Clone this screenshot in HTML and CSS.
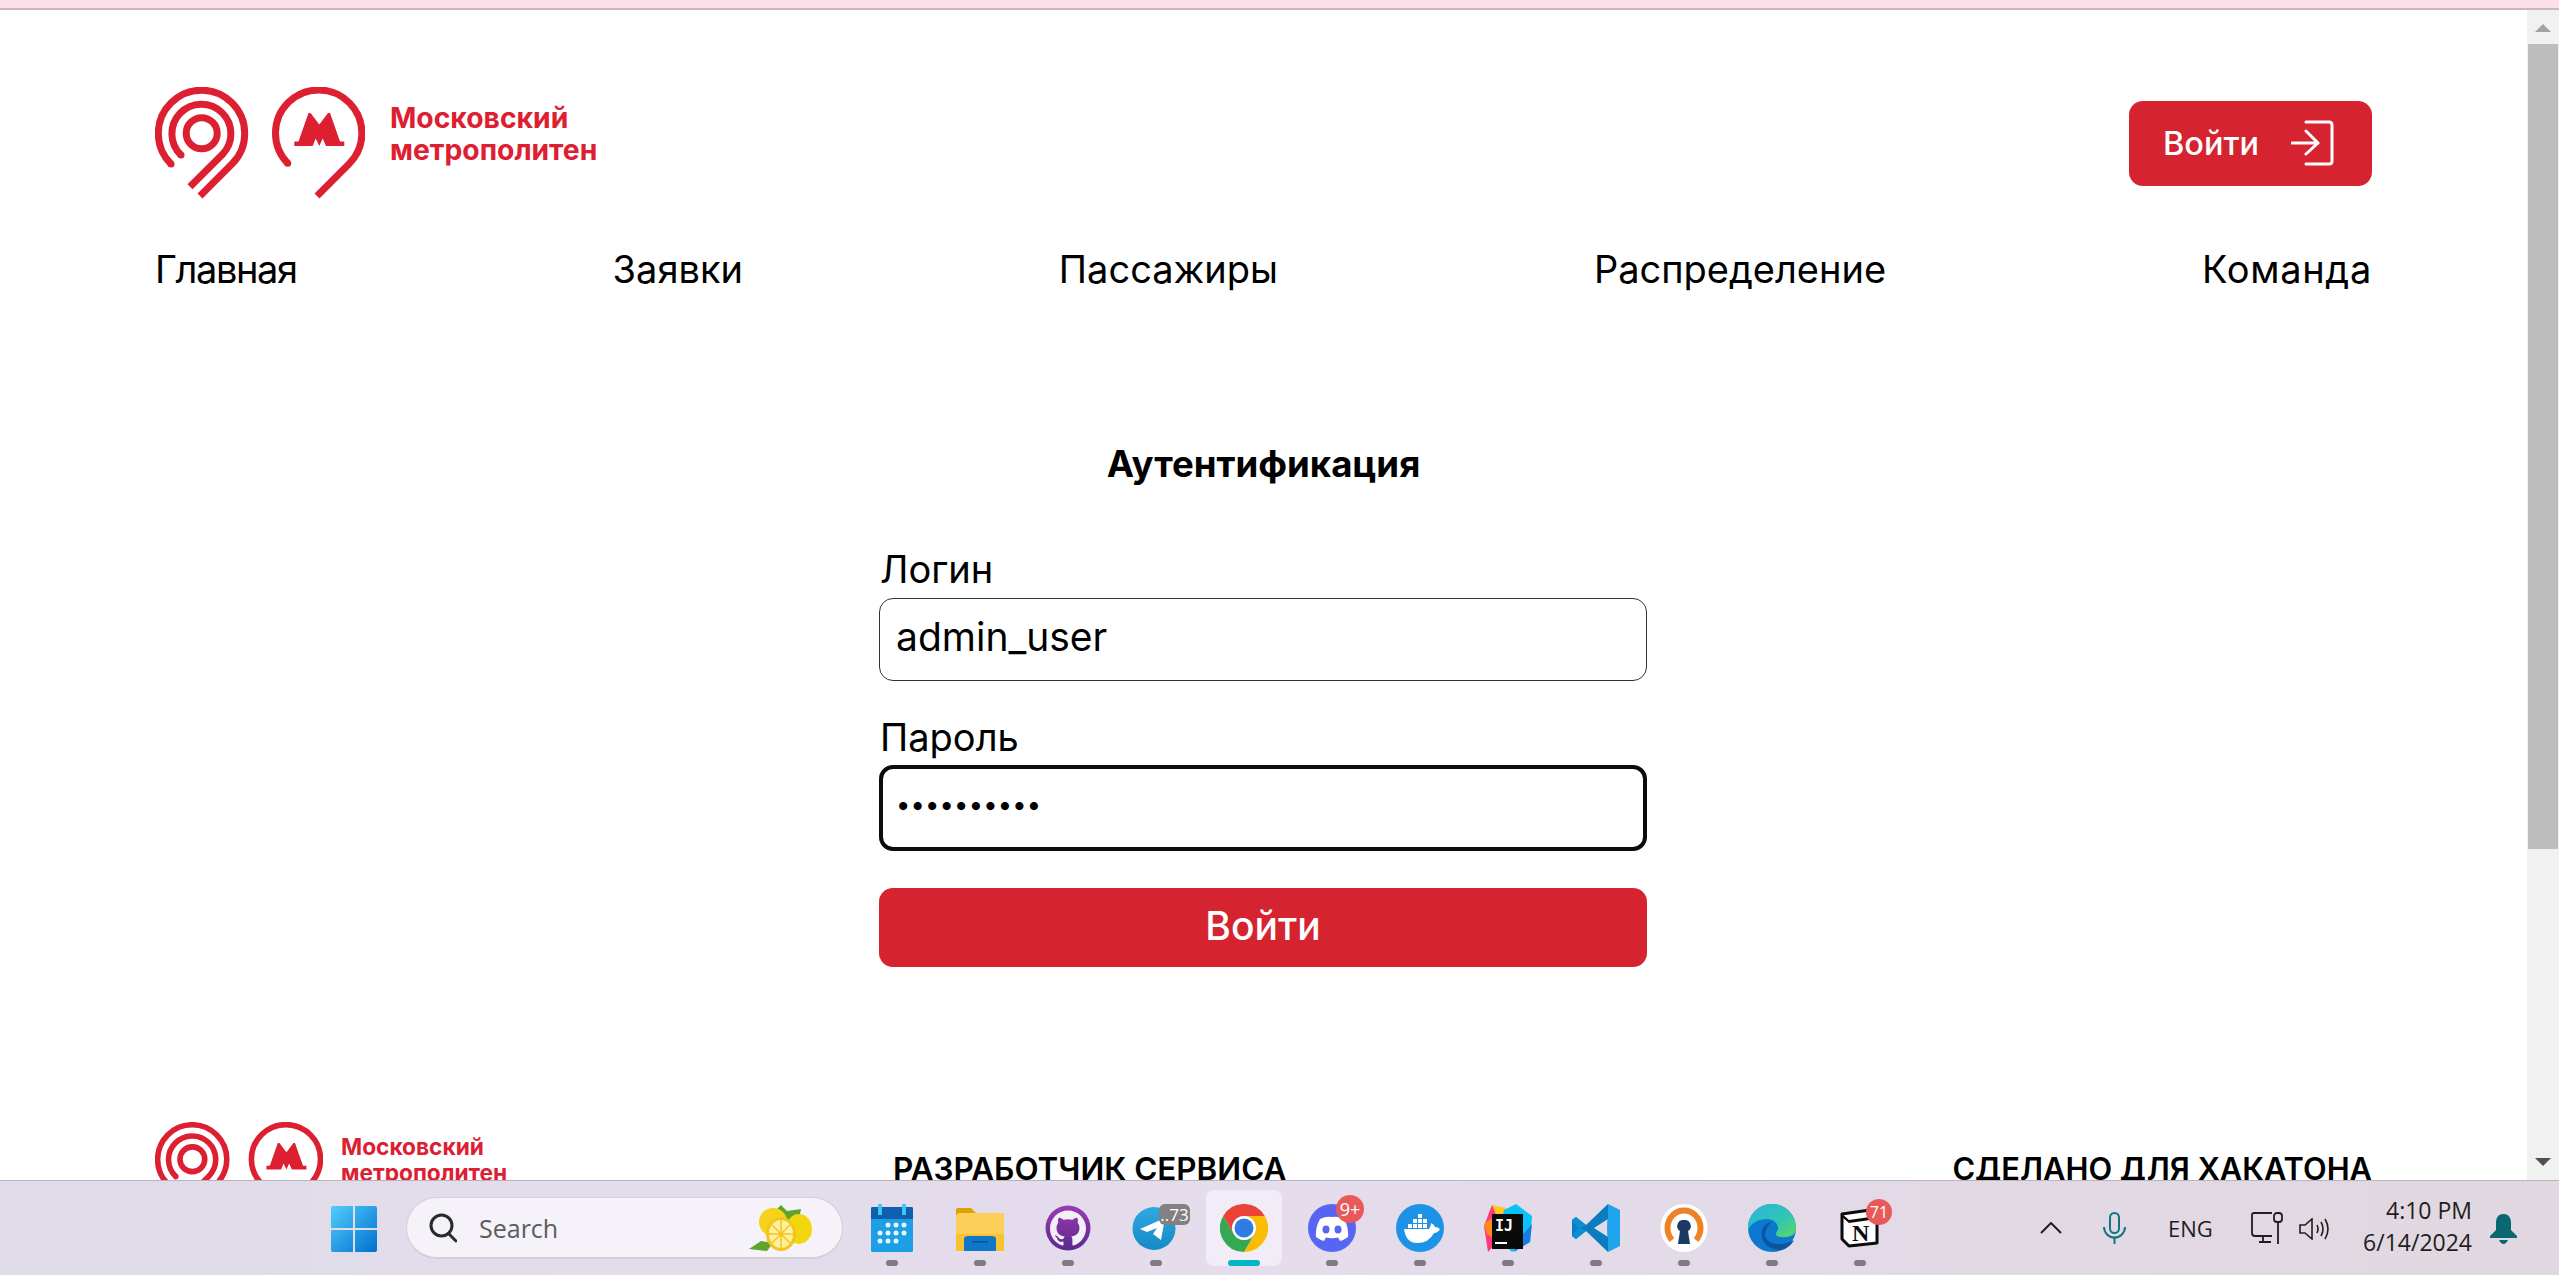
FILE: index.html
```html
<!DOCTYPE html>
<html lang="ru">
<head>
<meta charset="utf-8">
<title>Московский метрополитен</title>
<link rel="stylesheet" href="styles.css">
</head>
<body>
<svg class="defs" width="0" height="0">
  <symbol id="mark" viewBox="154 87 210 112">
    <g fill="none" stroke="#dc2032" stroke-width="7">
      <circle cx="200.7" cy="133.3" r="15.5"/>
      <path d="M170 164A43.2 43.2 0 1 1 231.2 163.8L199 196"/>
      <path d="M180 155A29.5 29.5 0 1 1 221.6 154.2L189 186.8"/>
      <path d="M286.7 163.3A43.2 43.2 0 1 1 348.2 163.8L316 196"/>
    </g>
    <g fill="#dc2032">
      <circle cx="170" cy="164" r="3.5"/><circle cx="180" cy="155" r="3.5"/><circle cx="286.7" cy="163.3" r="3.5"/>
      <path d="M293.300 146V141.500H297.500L307.500 113H309.500L318.300 124.500L327 113H329L339 141.500H343.300V146H325L321.700 138.500L318.300 146L314.700 138.500L311.700 146Z"/>
    </g>
  </symbol>
</svg>
<div class="strip"></div>
<div class="viewport">
  <div class="page">
    <header class="head">
      <a class="logo">
        <svg class="logo-mark"><use href="#mark"/></svg>
        <span class="logo-text">Московский<br>метрополитен</span>
      </a>
      <button class="login">Войти
        <svg class="login-icon" viewBox="0 0 44 46" fill="none" stroke="#fff" stroke-width="3" stroke-linecap="round" stroke-linejoin="round"><path d="M1 23H27M15 11L27 23L15 34M15 2H38Q41 2 41 5V41Q41 44 38 44H15"/></svg>
      </button>
    </header>
    <nav class="nav">
      <a class="nav-tight">Главная</a><a>Заявки</a><a>Пассажиры</a><a>Распределение</a><a class="nav-wide">Команда</a>
    </nav>
    <main class="auth">
      <h1 class="auth-title">Аутентификация</h1>
      <form class="form">
        <label class="label">Логин</label>
        <input class="input" type="text" value="admin_user">
        <label class="label label-second">Пароль</label>
        <input class="input input-focus" type="password" value="1234567890">
        <button class="submit" type="button">Войти</button>
      </form>
    </main>
    <footer class="foot">
      <a class="logo logo-small">
        <svg class="logo-mark"><use href="#mark"/></svg>
        <span class="logo-text">Московский<br>метрополитен</span>
      </a>
      <div class="foot-head">РАЗРАБОТЧИК СЕРВИСА</div>
      <div class="foot-head foot-head-right">СДЕЛАНО ДЛЯ ХАКАТОНА</div>
    </footer>
  </div>
  <div class="scroll">
    <div class="scroll-up"></div>
    <div class="scroll-thumb"></div>
    <div class="scroll-track"></div>
    <div class="scroll-down"></div>
  </div>
</div>
<div class="taskbar">
  <svg class="start" viewBox="0 0 46 46">
    <defs>
      <linearGradient id="win" x1="0" y1="0" x2="1" y2="1"><stop offset="0" stop-color="#52cdfb"/><stop offset="1" stop-color="#0070cf"/></linearGradient>
    </defs>
    <path fill="url(#win)" d="M0 2Q0 0 2 0H22V22H0ZM24 0H44Q46 0 46 2V22H24ZM0 24H22V46H2Q0 46 0 44ZM24 24H46V44Q46 46 44 46H24Z"/>
  </svg>
  <div class="search">
    <svg class="search-icon" viewBox="0 0 28 30" fill="none" stroke="#2a2a2a" stroke-width="3" stroke-linecap="round"><circle cx="12.500" cy="12.500" r="10.500"/><path d="M20 21L27 28"/></svg>
    <span class="search-text">Search</span>
    <svg class="lemon" viewBox="0 0 68 46">
      <path fill="#5fa52d" d="M26 6L32 0L38 6L52 4L50 14L36 16ZM12 36L0 44L18 46L24 38Z"/>
      <circle cx="24" cy="17" r="14" fill="#f6d21c"/>
      <ellipse cx="50" cy="24" rx="13" ry="15" fill="#f2d70f"/>
      <ellipse cx="32" cy="29" rx="15" ry="17" fill="#f3c51c"/>
      <ellipse cx="32" cy="29" rx="12" ry="14" fill="#fdf0a0"/>
      <path stroke="#f3c51c" stroke-width="1.500" d="M32 15V43M20 29H44M23 20L41 38M41 20L23 38"/>
    </svg>
  </div>
  <div class="apps">
    <div class="app">
      <svg class="icon" viewBox="0 0 48 48">
        <rect x="3" y="3" width="42" height="45" rx="1.500" fill="#1c9fe4"/>
        <path fill="#0f5fae" d="M3 4.500Q3 3 4.500 3H43.500Q45 3 45 4.500V15H3Z"/>
        <path fill="#3fc4f5" d="M10 0H14V11H10ZM34 0H38V11H34Z"/>
        <g fill="#e9f5fc"><circle cx="20" cy="21" r="2.500"/><circle cx="28" cy="21" r="2.500"/><circle cx="36" cy="21" r="2.500"/><circle cx="12" cy="29" r="2.500"/><circle cx="20" cy="29" r="2.500"/><circle cx="28" cy="29" r="2.500"/><circle cx="36" cy="29" r="2.500"/><circle cx="12" cy="37" r="2.500"/><circle cx="20" cy="37" r="2.500"/><circle cx="28" cy="37" r="2.500"/></g>
      </svg>
      <i class="dot"></i>
    </div>
    <div class="app">
      <svg class="icon" viewBox="0 0 48 48">
        <path fill="#e0a200" d="M0 6Q0 4 2 4H15L20 9V14H0Z"/>
        <path fill="#fccf5a" d="M0 47V13Q0 9 4 9H48V47Z"/>
        <path fill="#f5b50b" d="M0 30H48V47H0Z" opacity=".5"/>
        <path fill="#0f76c8" d="M8 47V35Q8 32 12 32H36Q40 32 40 35V47Z"/>
        <path fill="#0a4f92" d="M16 37H32V38.500H16Z"/>
      </svg>
      <i class="dot"></i>
    </div>
    <div class="app">
      <svg class="icon" viewBox="0 0 48 48">
        <defs><linearGradient id="gh" x1="0" y1="0" x2="0" y2="1"><stop offset="0" stop-color="#9b3bb3"/><stop offset="1" stop-color="#5b2a8e"/></linearGradient></defs>
        <circle cx="24" cy="24" r="22.500" fill="url(#gh)"/>
        <path transform="translate(6 6) scale(1.500)" fill="#f4eef6" d="M12 .297c-6.630 0-12 5.373-12 12 0 5.303 3.438 9.800 8.205 11.385.6.113.82-.258.82-.577 0-.285-.01-1.040-.015-2.040-3.338.724-4.042-1.610-4.042-1.610C4.422 18.070 3.633 17.700 3.633 17.700c-1.087-.744.084-.729.084-.729 1.205.084 1.838 1.236 1.838 1.236 1.070 1.835 2.809 1.305 3.495.998.108-.776.417-1.305.76-1.605-2.665-.3-5.466-1.332-5.466-5.930 0-1.310.465-2.380 1.235-3.220-.135-.303-.54-1.523.105-3.176 0 0 1.005-.322 3.300 1.230.96-.267 1.980-.399 3-.405 1.020.006 2.040.138 3 .405 2.280-1.552 3.285-1.230 3.285-1.230.645 1.653.24 2.873.12 3.176.765.84 1.230 1.910 1.230 3.220 0 4.610-2.805 5.625-5.475 5.920.42.36.81 1.096.81 2.220 0 1.606-.015 2.896-.015 3.286 0 .315.21.69.825.57C20.565 22.092 24 17.592 24 12.297c0-6.627-5.373-12-12-12"/>
      </svg>
      <i class="dot"></i>
    </div>
    <div class="app">
      <svg class="icon" viewBox="0 0 48 48">
        <defs><linearGradient id="tg" x1="0" y1="0" x2="0" y2="1"><stop offset="0" stop-color="#2fa9e2"/><stop offset="1" stop-color="#1589c4"/></linearGradient></defs>
        <circle cx="22" cy="24.500" r="21.500" fill="url(#tg)"/>
        <path fill="#fff" d="M8 25L33 14L29 36L21 30L25 24L15 28Z"/>
      </svg>
      <span class="badge badge-grey">..73</span>
      <i class="dot"></i>
    </div>
    <div class="app app-active">
      <svg class="icon" viewBox="0 0 48 48">
        <path fill="#ea4335" d="M3.200 12A24 24 0 0 1 44.800 12L24 12A12 12 0 0 0 13.600 30Z"/>
        <path fill="#fbbc04" d="M44.800 12A24 24 0 0 1 24 48L34.400 30A12 12 0 0 0 24 12Z"/>
        <path fill="#34a853" d="M3.200 12L13.600 30A12 12 0 0 0 34.400 30L24 48A24 24 0 0 1 3.200 12Z"/>
        <circle cx="24" cy="24" r="11.500" fill="#fff"/>
        <circle cx="24" cy="24" r="9.500" fill="#2f7de1"/>
      </svg>
      <i class="dot dot-active"></i>
    </div>
    <div class="app">
      <svg class="icon" viewBox="0 0 48 48">
        <circle cx="24" cy="24" r="24" fill="#5865f2"/>
        <path fill="#fff" d="M12 15Q18 12 24 13Q30 12 36 15Q41 24 40 33Q36 36 32 37L30 33.500Q24 35 18 33.500L16 37Q12 36 8 33Q7 24 12 15Z"/>
        <ellipse cx="18" cy="25.500" rx="3.500" ry="4" fill="#5865f2"/>
        <ellipse cx="30" cy="25.500" rx="3.500" ry="4" fill="#5865f2"/>
      </svg>
      <span class="badge badge-red badge-discord">9+</span>
      <i class="dot"></i>
    </div>
    <div class="app">
      <svg class="icon" viewBox="0 0 48 48">
        <circle cx="24" cy="24" r="24" fill="#1d92e6"/>
        <path fill="#fff" d="M8 25H33Q35 22 35 19Q38 20 39 23Q42 23 44 25Q42 29 38 29Q33 39 21 39Q10 39 8 25Z"/>
        <g fill="#fff"><rect x="12" y="20" width="4" height="4"/><rect x="17" y="20" width="4" height="4"/><rect x="22" y="20" width="4" height="4"/><rect x="27" y="20" width="4" height="4"/><rect x="17" y="15" width="4" height="4"/><rect x="22" y="15" width="4" height="4"/><rect x="27" y="15" width="4" height="4"/><rect x="22" y="10" width="4" height="4"/></g>
      </svg>
      <i class="dot"></i>
    </div>
    <div class="app">
      <svg class="icon" viewBox="0 0 48 48">
        <path fill="#ffc61b" d="M3 16L8 1L22 4L16 20Z"/>
        <path fill="#fc3a7b" d="M0 22L8 1L20 30L4 48Z"/>
        <path fill="#ff8c1a" d="M0 20L8 14L12 36L3 30Z"/>
        <path fill="#0ac2f5" d="M20 6L32 0L48 12L46 38L28 48L14 36Z"/>
        <path fill="#1a7de0" d="M30 48L46 38L48 20L34 36Z"/>
        <rect x="8" y="10" width="31" height="35" fill="#0a0a0a"/>
        <text class="ij" x="11" y="27">IJ</text>
        <rect x="11" y="38" width="12" height="2" fill="#fff"/>
      </svg>
      <i class="dot"></i>
    </div>
    <div class="app">
      <svg class="icon" viewBox="0 0 48 48">
        <path fill="#22a3ee" d="M36 0L48 6V42L36 48L35 24Z"/>
        <path fill="#0a7dbf" d="M36 0L14 21L4 13L0 16V32L4 35L14 27L36 48V33L22 24L36 15Z"/>
        <path fill="#0a8fd5" d="M0 16L4 13L14 21L8 24L14 27L4 35L0 32L6 24Z"/>
      </svg>
      <i class="dot"></i>
    </div>
    <div class="app">
      <svg class="icon" viewBox="0 0 48 48">
        <ellipse cx="24" cy="24" rx="23.500" ry="24" fill="#fff"/>
        <path fill="none" stroke="#ef8225" stroke-width="6" d="M12 36A16.500 17.500 0 1 1 36 36"/>
        <path fill="#1b3a63" d="M24 16A6 6 0 0 1 28 27L30 40H18L20 27A6 6 0 0 1 24 16Z"/>
      </svg>
      <i class="dot"></i>
    </div>
    <div class="app">
      <svg class="icon" viewBox="0 0 48 48">
        <defs><linearGradient id="edge" x1="0" y1="0" x2="1" y2="1"><stop offset="0" stop-color="#2ab5e0"/><stop offset=".6" stop-color="#32c6b0"/><stop offset="1" stop-color="#5edb5b"/></linearGradient></defs>
        <circle cx="24" cy="24" r="24" fill="#0d78cf"/>
        <path fill="url(#edge)" d="M0 21C2 8 13 0 24 0C38 0 48 12 48 24C48 32 40 34 32 33C26 32 28 28 30 26C31 20 26 15 19 15C10 15 3 19 0 26Z"/>
        <path fill="#0c56a0" d="M17 32C17 24 22 19 24 18C16 19 12 26 14 34C16 42 26 47 34 46C40 44 44 40 46 36C40 40 22 44 17 32Z"/>
      </svg>
      <i class="dot"></i>
    </div>
    <div class="app">
      <svg class="icon" viewBox="-4 -4 48 48">
        <path fill="#fff" stroke="#0b0b0b" stroke-width="3" stroke-linejoin="round" d="M2 6L30 2L37 8V35L9 38L2 31Z"/>
        <path fill="#0b0b0b" d="M2 6L9 12L37 8V11L9 15L2 9Z"/>
        <text class="notion-n" x="12" y="33">N</text>
      </svg>
      <span class="badge badge-red badge-notion">71</span>
      <i class="dot"></i>
    </div>
  </div>
  <div class="tray">
    <svg class="t-chevron" viewBox="0 0 22 12" fill="none" stroke="#1e1e1e" stroke-width="2"><path d="M1 11L11 1L21 11"/></svg>
    <svg class="t-mic" viewBox="0 0 23 32" fill="none" stroke="#0f7680" stroke-width="2"><rect x="7" y="1" width="9" height="20" rx="4.500"/><path d="M1 15A10.500 10.500 0 0 0 22 15M11.500 26V32"/></svg>
    <span class="t-lang">ENG</span>
    <svg class="t-net" viewBox="0 0 32 32" fill="none" stroke="#1e1e1e" stroke-width="1.800"><path d="M21 1H3Q1 1 1 3V21Q1 24 4 24H21M8 30H20M12 24V30"/><rect x="23" y="1" width="8" height="9" rx="3"/><path d="M27 10V32"/></svg>
    <svg class="t-vol" viewBox="0 0 32 22" fill="none" stroke="#1e1e1e" stroke-width="1.600"><path d="M1 7H6L13 1V21L6 15H1ZM18 7Q20 11 18 15M22 4Q26 11 22 18M26 1Q32 11 26 21"/></svg>
    <div class="t-clock"><span>4:10 PM</span><span>6/14/2024</span></div>
    <svg class="t-bell" viewBox="0 0 27 30" fill="#0a6770"><path d="M13.500 0C19 0 21 4 21 9V16L27 22V24H0V22L6 16V9C6 4 8 0 13.500 0Z"/><path d="M9 26H18Q16 30 13.500 30Q11 30 9 26Z"/></svg>
  </div>
</div>
</body>
</html>
```
FILE: styles.css
```css
* { box-sizing: border-box; }
html, body { margin: 0; padding: 0; }
body {
  width: 2559px;
  height: 1275px;
  overflow: hidden;
  display: flex;
  flex-direction: column;
  font-family: "Inter", "Noto Sans", sans-serif;
  color: #000;
  background: #fff;
}
.defs { position: absolute; }
.strip {
  height: 10px;
  flex: none;
  background: #fde0e5;
  border-bottom: 2px solid #c9b8bf;
}
.viewport { flex: none; height: 1170px; display: flex; overflow: hidden; }
.page { flex: 1; min-width: 0; padding: 77px 155px 0; }
.head { display: flex; justify-content: space-between; align-items: center; height: 112px; }
.logo { display: flex; align-items: center; gap: 25px; }
.logo-mark { width: 210px; height: 112px; flex: none; }
.logo-text { font-size: 28.3px; line-height: 32px; font-weight: 700; color: #dc2032; padding-bottom: 19px; }
.logo-small { gap: 18px; }
.logo-small .logo-mark { width: 168px; height: 90px; }
.logo-small .logo-text { font-size: 22.7px; line-height: 26px; padding-bottom: 14px; }
.login {
  display: flex;
  align-items: center;
  gap: 32px;
  width: 243px;
  height: 85px;
  padding: 0 0 0 34px;
  border: 0;
  border-radius: 14px;
  background: #d52330;
  color: #fff;
  font: 500 32.5px "Inter", sans-serif;
}
.login-icon { width: 44px; height: 46px; }
.nav { display: flex; justify-content: space-between; font-size: 38px; line-height: 44px; margin-top: 48px; }
.nav-tight { letter-spacing: -1.4px; }
.nav-wide { letter-spacing: 0.7px; }
.auth { display: flex; flex-direction: column; align-items: center; margin-top: 151px; }
.auth-title { margin: 0; font-size: 36.6px; line-height: 44px; font-weight: 700; }
.form { width: 768px; margin: 61px 1px 0 0; display: flex; flex-direction: column; }
.label { font-size: 38px; line-height: 44px; margin-bottom: 7px; padding-left: 1px; }
.label-second { margin-top: 34px; margin-bottom: 6px; }
.input {
  width: 768px;
  height: 83px;
  padding: 0 16px 6px;
  border: 1px solid #2b3445;
  border-radius: 14px;
  background: #fff;
  font: 400 39px "Inter", sans-serif;
  color: #000;
  outline: 0;
}
.input-focus { height: 86px; border: 4px solid #0c0c0c; padding: 0 14px 7px; font-size: 26px; font-weight: 700; letter-spacing: 2.2px; }
.submit {
  height: 79px;
  margin-top: 37px;
  border: 0;
  border-radius: 14px;
  background: #d52330;
  color: #fff;
  font: 500 39px "Inter", sans-serif;
  padding-bottom: 6px;
}
.foot { display: grid; grid-template-columns: 738px 1fr auto; margin-top: 155px; }
.foot-head { font-size: 31.4px; line-height: 40px; font-weight: 600; margin-top: 27px; }
.foot-head-right { font-size: 30.8px; }
.scroll { flex: none; width: 32px; display: flex; flex-direction: column; background: #f1f1f1; align-items: center; }
.scroll-up { width: 0; height: 0; flex: none; border: 8px solid transparent; border-top-width: 0; border-bottom: 8px solid #a3a3a3; margin-top: 14px; margin-bottom: 12px; }
.scroll-thumb { flex: none; width: 30px; height: 805px; background: #bdbdbd; }
.scroll-track { flex: 1; }
.scroll-down { flex: none; width: 0; height: 0; border: 8px solid transparent; border-bottom-width: 0; border-top: 8px solid #505050; margin-bottom: 14px; }
.taskbar {
  flex: 1;
  display: flex;
  align-items: flex-start;
  padding-left: 331px;
  border-top: 1px solid #b9b3bd;
  background: linear-gradient(90deg, #e0dcea, #e5dcec 50%, #e0d7e0);
}
.start { width: 46px; height: 46px; margin-top: 25px; flex: none; }
.search {
  flex: none;
  width: 437px;
  height: 62px;
  margin: 16px 5px 0 29px;
  padding: 0 22px;
  display: flex;
  align-items: center;
  border: 1px solid #d3cfda;
  border-bottom-width: 2px;
  border-radius: 31px;
  background: #f5f3f9;
}
.search-icon { width: 28px; height: 30px; flex: none; }
.search-text { margin-left: 22px; font: 400 25px "Open Sans", sans-serif; color: #5c5c5c; flex: 1; }
.lemon { width: 68px; height: 46px; margin-right: 3px; flex: none; }
.apps { display: flex; flex: none; }
.app {
  position: relative;
  width: 88px;
  height: 94px;
  padding-top: 23px;
  display: flex;
  flex-direction: column;
  align-items: center;
}
.app-active::before {
  content: "";
  position: absolute;
  left: 6px;
  top: 9px;
  width: 76px;
  height: 76px;
  border-radius: 8px;
  background: #f1ecf5;
}
.icon { position: relative; width: 48px; height: 48px; flex: none; }
.dot { position: relative; width: 12px; height: 6px; margin-top: 8px; border-radius: 3px; background: #7f7a82; }
.dot-active { width: 32px; background: #00b7c3; }
.badge {
  position: absolute;
  display: flex;
  align-items: center;
  justify-content: center;
  color: #fff;
  font-family: "Open Sans", sans-serif;
}
.badge-grey { left: 47px; top: 23px; width: 31px; height: 21px; border-radius: 6px; background: #838083; font-size: 17px; }
.badge-red { background: #e85a5a; border-radius: 50%; }
.badge-discord { left: 48px; top: 14px; width: 28px; height: 28px; font-size: 18px; }
.badge-notion { left: 50px; top: 18px; width: 26px; height: 26px; font-size: 16px; }
.ij { font: 700 15px "DejaVu Sans Mono", monospace; fill: #fff; }
.notion-n { font: 700 24px "Liberation Serif", serif; fill: #0b0b0b; }
.tray { flex: none; display: flex; align-items: flex-start; margin-left: 136px; }
.t-chevron { width: 22px; height: 12px; margin-top: 41px; }
.t-mic { width: 23px; height: 32px; margin: 31px 0 0 41px; }
.t-lang { margin: 34px 0 0 42px; font: 400 22px/26px "Open Sans", sans-serif; color: #1e1e1e; width: 46px; }
.t-net { width: 32px; height: 32px; margin: 31px 0 0 37px; }
.t-vol { width: 32px; height: 22px; margin: 37px 0 0 16px; }
.t-clock {
  width: 141px;
  margin-top: 16px;
  display: flex;
  flex-direction: column;
  align-items: flex-end;
  gap: 6px;
  font: 400 23px/26px "Open Sans", sans-serif;
  color: #1e1e1e;
}
.t-bell { width: 27px; height: 30px; margin: 33px 0 0 18px; }
```
